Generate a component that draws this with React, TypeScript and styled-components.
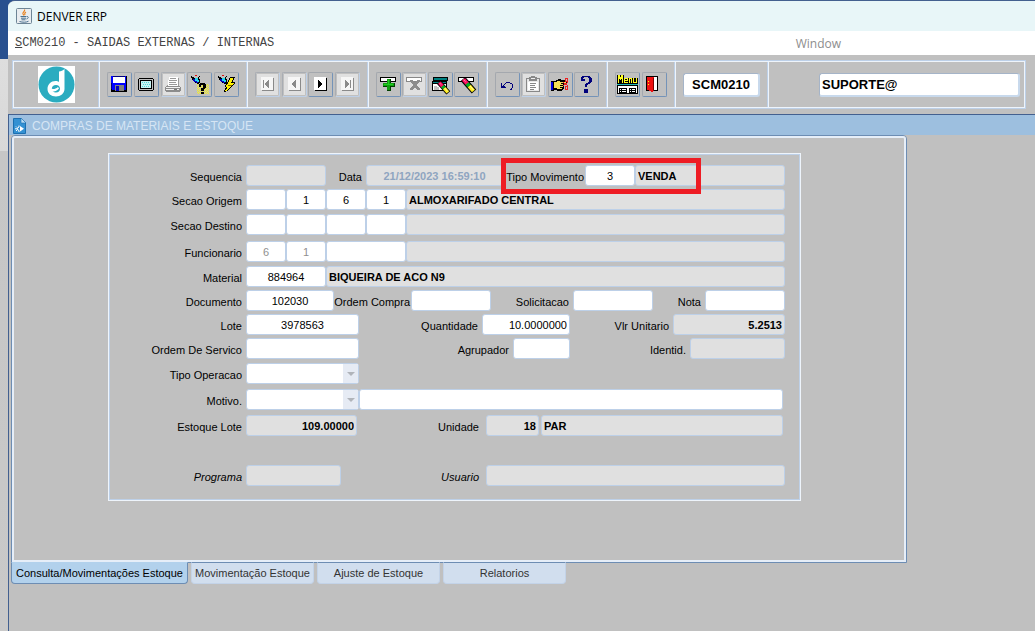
import React from "react";
import styled, { createGlobalStyle, css } from "styled-components";

const GlobalStyle = createGlobalStyle`
  * { box-sizing: border-box; }
  body {
    margin: 0;
    font-family: "Liberation Sans", Arial, sans-serif;
    font-size: 11px;
    line-height: 13px;
    color: #000;
  }
  input, select, button { font: inherit; color: inherit; margin: 0; border-radius: 0; }
`;

const edge = "#bdd0e8";
const shine = "#eef4fb";
const gray = "#c0c0c0";

const Desktop = styled.div`
  min-height: 100vh;
  display: flex;
  padding-left: 8px;
  background: linear-gradient(#28508f 59px, #dedede 59px, #d8d8d8 151px, #c6c6c6 151px, #c9c9c9);
`;

const Window = styled.div`
  flex: 1;
  min-width: 0;
  display: flex;
  flex-direction: column;
  border-top: 1px solid #43608f;
  background: ${gray};
  border-top-left-radius: 7px;
  overflow: hidden;
`;

const TitleBar = styled.header`
  height: 30px;
  display: flex;
  align-items: center;
  gap: 5px;
  padding-left: 8px;
  background: #e8f6f8;
  font-family: "Open Sans", "Noto Sans", sans-serif;
  font-size: 12px;
`;

const MenuBar = styled.nav`
  height: 24px;
  display: flex;
  align-items: center;
  justify-content: space-between;
  padding: 0 194px 0 7px;
  background: #fff;
`;

const MenuItem = styled.button<{ $mono?: boolean }>`
  border: 0;
  padding: 0;
  background: none;
  font-size: 12px;
  white-space: nowrap;
  color: ${(p) => (p.$mono ? "#444" : "#8d8d8d")};
  font-family: ${(p) => (p.$mono ? '"Liberation Mono", monospace' : '"Open Sans", sans-serif')};
`;

const Toolbar = styled.div`
  display: flex;
  height: 49px;
  margin: 5px 9px 5px 4px;
  padding: 1px;
  border: 1px solid ${edge};
  box-shadow: inset 0 0 0 1px ${shine};
`;

const Group = styled.div<{ $w?: number }>`
  display: flex;
  align-items: center;
  justify-content: space-between;
  padding: 0 8px 0 7px;
  ${(p) =>
    p.$w
      ? css`
          flex: 0 0 ${p.$w}px;
          border-right: 1px solid ${shine};
          box-shadow: inset -1px 0 ${edge};
        `
      : css`
          flex: 1;
          padding: 0 4px 0 50px;
        `}
`;

const LogoGroup = styled(Group)`
  justify-content: center;
  padding: 0;
`;

const Tool = styled.button`
  width: 25px;
  height: 25px;
  padding: 1px;
  display: block;
  background: ${gray};
  border: 1px solid;
  border-color: #a4a8ae #7493b8 #7493b8 #a4a8ae;
  border-radius: 2px;
  &:disabled {
    background: #e0e0e0;
    border-color: #a9adb3 #bdd0e8 #bdd0e8 #a9adb3;
    box-shadow: inset 0 0 0 1px ${gray};
  }
  svg { display: block; }
`;

const ToolInput = styled.input<{ $center?: boolean }>`
  width: 100%;
  height: 24px;
  padding: 0 2px;
  border: 2px solid;
  border-color: #a5b4c8 #c8d9ec #c8d9ec #a5b4c8;
  border-width: 1px 2px 2px 1px;
  border-radius: 3px;
  background: #fff;
  font-size: 13px;
  font-weight: bold;
  text-align: ${(p) => (p.$center ? "center" : "left")};
  outline: none;
`;

const Module = styled.main`
  flex: 1;
  border-top: 1px solid #43608f;
  border-left: 1px solid #43608f;
  padding-bottom: 24px;
`;

const Caption = styled.div`
  height: 20px;
  display: flex;
  align-items: center;
  gap: 6px;
  padding: 2px 0 0 4px;
  background: #9dbfdf;
  color: #d6e5f4;
  h1 { margin: 0; font-size: 12px; font-weight: normal; }
`;

const Panel = styled.div`
  margin: 0 128px 0 2px;
  border: 1px solid #6d8db3;
  border-radius: 4px 4px 0 0;
`;

const PanelBody = styled.div`
  border: 2px solid #e6eef8;
  border-radius: 3px 3px 0 0;
  padding: 15px 103px 59px 94px;
`;

const Form = styled.form`
  border: 1px solid ${shine};
  box-shadow: inset 0 0 0 1px ${edge};
  padding: 11px 15px 14px 1px;
`;

const Row = styled.div<{ $space?: number; $inset?: boolean }>`
  display: flex;
  height: 21px;
  margin-top: ${(p) => p.$space ?? 3}px;
  padding-right: ${(p) => (p.$inset ? 2 : 0)}px;
`;

const Label = styled.label<{ $w?: number; $italic?: boolean; $gap?: number }>`
  flex: 0 0 ${(p) => p.$w ?? 136}px;
  padding: 2px ${(p) => p.$gap ?? 4}px 0 0;
  line-height: 20px;
  text-align: right;
  white-space: nowrap;
  font-style: ${(p) => (p.$italic ? "italic" : "normal")};
`;

const Field = styled.input<{
  $w?: number;
  $align?: "left" | "center" | "right";
  $bold?: boolean;
  $tone?: string;
}>`
  flex: ${(p) => (p.$w ? `0 0 ${p.$w}px` : "1 1 0")};
  width: ${(p) => (p.$w ? `${p.$w}px` : "auto")};
  min-width: 0;
  height: 21px;
  padding: 0 2px;
  border: 1px solid ${edge};
  border-radius: 3px;
  background: #fff;
  color: ${(p) => p.$tone ?? "#000"};
  font-weight: ${(p) => (p.$bold ? "bold" : "normal")};
  text-align: ${(p) => p.$align ?? "left"};
  outline: none;
  &:read-only { background: #e0e0e0; }
`;

const SelectBox = styled.div`
  flex: 0 0 113px;
  position: relative;
  svg {
    position: absolute;
    top: 1px;
    right: 1px;
    pointer-events: none;
  }
`;

const Select = styled.select`
  width: 100%;
  height: 21px;
  appearance: none;
  padding: 0 18px 0 2px;
  border: 1px solid ${edge};
  border-radius: 3px;
  background: #fff;
`;

const Marked = styled.div`
  flex: 1;
  min-width: 0;
  display: flex;
  position: relative;
`;

const Highlight = styled.div`
  position: absolute;
  left: -2px;
  top: -7px;
  width: 200px;
  height: 36px;
  border: 5px solid #ee1c24;
  pointer-events: none;
`;

const Gap = styled.span`
  flex: 0 0 2px;
`;

const Tabs = styled.div`
  display: flex;
  gap: 3px;
  margin: -1px 0 0 2px;
`;

const Tab = styled.button<{ $active?: boolean }>`
  width: ${(p) => (p.$active ? 177 : 123)}px;
  height: 22px;
  padding: 0;
  white-space: nowrap;
  border: 1px solid ${(p) => (p.$active ? "#6d8db3" : "#c3d3e8")};
  border-top-color: ${(p) => (p.$active ? "#b2d1ec" : "#6d8db3")};
  border-radius: 0 0 4px 4px;
  background: ${(p) => (p.$active ? "#b2d1ec" : "#d1deee")};
  color: ${(p) => (p.$active ? "#000" : "#333")};
`;

/* ---- icons, drawn on a 21 x 21 pixel grid ---- */

const Icon = ({ children }: { children: React.ReactNode }) => (
  <svg width="21" height="21" viewBox="0 0 21 21" shapeRendering="crispEdges" aria-hidden="true">
    {children}
  </svg>
);

const SaveIcon = () => (
  <Icon>
    <path d="M2 2h16v16H3v-1H2z" fill="#000" />
    <path d="M2 2h15v14H3v-1H2z" fill="#0000ff" />
    <path d="M4 2h12v7H4z" fill="#fff" />
    <path d="M4 2h12v1H4zM2 9h1v6H2z" fill="#000080" />
    <path d="M6 11h9v6H6z" fill="#808080" />
    <path d="M7 12h3v5H7z" fill="#0000c0" />
    <path d="M2 17h16v1H2z" fill="#000" />
  </Icon>
);

const ScreenIcon = () => (
  <Icon>
    <path d="M3 4h14v1h1v11h-1v1H3v-1H2V5h1z" fill="#000" />
    <path d="M3 5h14v11H3z" fill="#c0c0c0" />
    <path d="M4 6h12v9H4z" fill="#000" />
    <path d="M5 7h10v7H5z" fill="#c8f4f4" />
    <path d="M6 8h1v1H6zM8 8h1v1H8zM10 8h1v1h-1zM12 8h1v1h-1zM7 10h1v1H7zM9 10h1v1H9zM11 10h1v1h-1zM13 10h1v1h-1zM6 12h1v1H6zM8 12h1v1H8zM10 12h1v1h-1zM12 12h1v1h-1z" fill="#4fd8d8" />
  </Icon>
);

const PrintIcon = () => (
  <Icon>
    <path d="M6 3h9v10H5V6h1z" fill="#fff" />
    <path d="M7 4h6v1H7zM6 6h8v1H6zM6 8h7v1H6zM6 10h8v1H6zM15 4h1v8h-1zM4 11h1v1H4z" fill="#999" />
    <path d="M3 12h14v1h1v4h-1v1H3v-1H2v-4h1z" fill="#8c8c8c" />
    <path d="M3 13h14v1H3zM3 15h13v1H3z" fill="#f2f2f2" />
    <path d="M11 15h3v1h-3z" fill="#777" />
  </Icon>
);

const Torch = () => (
  <>
    <path d="M6 1h2v1H6z" fill="#e01010" />
    <path d="M2 2h1v1h2v1h4V3h1V2h1v1h-1v2h1v4h-1v1H8V9H6V8H5V7H4V6H3V4H2z" fill="#000" />
    <path d="M6 4h3v2h1v2H8V7H6z" fill="#20d8f0" />
    <path d="M4 5h2v2h2v1h1v1H7V8H5V7H4z" fill="#0000c0" />
  </>
);

const QueryIcon = () => (
  <Icon>
    <g fill="#f6f020">
      {[10, 12, 14, 16, 18].map((y) =>
        [8, 10, 12, 14, 16, 18].map((x) => <path key={`${x}-${y}`} d={`M${x} ${y}h1v1h-1zM${x + 1} ${y + 1}h1v1h-1z`} />)
      )}
    </g>
    <Torch />
    <path d="M11 9h5v1h1v4h-1v1h-1v2h-3v-3h2v-3h-2v2h-2v-3h1zM12 18h3v2h-3z" fill="#000" />
  </Icon>
);

const ExecuteIcon = () => (
  <Icon>
    <Torch />
    <path d="M14 3h5v1h-1v2h-1v2h2v2h-1v1h-1v1h-1v1h-1v1h-1v1h-1v1h-1v1h-2v1H8v-2h1v-2h1v-1H9v-2h1v-2h1V8h1V6h1V4h1z" fill="#000" />
    <path d="M14 4h3v2h-1v2h-1v1h3v1h-1v1h-1v1h-1v1h-1v1h-1v1h-1v1h-1v1H9v-1h1v-1h1v-2h-1v-2h1v-1h1V8h1V6h1z" fill="#fff200" />
    <path d="M12 11h4v1h-4z" fill="#806000" />
  </Icon>
);

const NavIcon = ({ glyph, off }: { glyph: string; off?: boolean }) => (
  <Icon>
    <path d="M5 4h12v13H5z" fill={off ? "#8a8a8a" : "#000"} />
    <path d="M4 3h12v13H4z" fill={off ? "#f6f6f6" : "#fff"} />
    <path d={glyph} fill={off ? "#8a8a8a" : "#000"} />
  </Icon>
);

const leftTri = "M11 6h1v8h-1v-1h-1v-1H9v-1H8V9h1V8h1V7h1z";
const rightTri = "M8 6h1v1h1v1h1v1h1v2h-1v1h-1v1H9v1H8z";

const AddIcon = () => (
  <Icon>
    <path d="M2 3h16v5H2z" fill="#000" />
    <path d="M3 4h14v3H3z" fill="#fff" />
    <path d="M9 5h4v4h4v4h-4v4H9v-4H5V9h4z" fill="#004000" />
    <path d="M9 5h3v4h4v3h-4v4H9v-4H5V9h4z" fill="#10a010" />
    <path d="M10 6h1v4h4v1H6v-1h4z" fill="#20d020" />
  </Icon>
);

const RemoveIcon = () => (
  <Icon>
    <path d="M2 3h16v5H2z" fill="#888" />
    <path d="M3 4h14v3H3z" fill="#fff" />
    <path d="M6 6h3v1h1v1h2V7h1V6h3v2h-1v1h-1v1h-1v2h1v1h1v1h1v2h-3v-1h-1v-1h-2v1H9v1H6v-2h1v-1h1v-1h1v-2H8V9H7V8H6z" fill="#8c8c8c" />
  </Icon>
);

const Pencil = () => (
  <g shapeRendering="auto" fill="none" strokeWidth="4">
    <path d="M7 5l11 12.500" stroke="#000" strokeWidth="6" />
    <path d="M7.500 5.500l4 4.500" stroke="#ff1060" />
    <path d="M11 9.500l2.200 2.500" stroke="#00b020" />
    <path d="M13.200 12l4.300 5" stroke="#ffee20" />
    <path d="M7.500 5.500l2 2.200" stroke="#ff80b0" strokeWidth="1" />
    <path d="M14 12l3.500 4" stroke="#fffbb0" strokeWidth="1" />
  </g>
);

const ClearBlockIcon = () => (
  <Icon>
    <path d="M3 3h15v4H3zM2 7h15v10H2z" fill="#000" />
    <path d="M4 4h13v2H4zM3 8h13v1H3z" fill="#008080" />
    <path d="M3 10h13v6H3z" fill="#fff" />
    <path d="M4 12h3v1h2v3H4z" fill="#c0c0c0" />
    <g transform="translate(3 4) scale(.85)">
      <Pencil />
    </g>
  </Icon>
);

const ClearRecordIcon = () => (
  <Icon>
    <path d="M2 3h16v5H2z" fill="#000" />
    <path d="M3 4h14v3H3z" fill="#fff" />
    <Pencil />
  </Icon>
);

const UndoIcon = () => (
  <Icon>
    <path d="M4 9h1v3h1v-1h1v-1h1V9h1V8h4v1h2v1h1v4h-1v2h-2v-1h1v-1h1v-4h-2V9H9v1H8v1H7v1h1v1h1v1H4z" fill="#00007c" />
  </Icon>
);

const ClipboardIcon = () => (
  <Icon>
    <path d="M3 4h3V3h2V2h4v1h2v1h3v14H3z" fill="#888" />
    <path d="M4 5h2v2h8V5h2v12H4z" fill="#e8e8e8" />
    <path d="M8 4h4v1H8z" fill="#eee" />
    <path d="M5 8h10v8H5z" fill="#fff" />
    <path d="M7 9h6v1H7zM7 11h5v1H7zM7 13h6v1H7zM7 15h4v1H7z" fill="#888" />
  </Icon>
);

const HandIcon = () => (
  <Icon>
    <path d="M1 7h3v10H1z" fill="#000" />
    <path d="M1 8h2v8H1z" fill="#0000e0" />
    <path d="M4 7h2V6h2V5h3v1h4v1h2v3h-3v5h-1v1h-1v1H7v-1H4z" fill="#000" />
    <path d="M4 8h3V7h3v1h6v1h-5v1h2v1h-3v1h3v1h-3v1h2v1H7v-1H4z" fill="#f3df58" />
    <g fill="none" stroke="#ee2020">
      <path d="M15.500 4.500h2v3h-2zM15.500 12.500h2v3h-2zM13 11.500l5-3M13 8.500l5 3" />
    </g>
  </Icon>
);

const HelpIcon = () => (
  <Icon>
    <path d="M6 2h8v1h1v1h1v4h-1v1h-1v1h-2v1h-1v2H9v-3h1V9h2V8h1V4h-1V3H8v1H7v3H5V3h1zM8 15h4v4H8z" fill="#00007c" />
    <path d="M7 5h2v2H7z" fill="#00007c" />
  </Icon>
);

const MenuIcon = () => (
  <Icon>
    <path d="M0 1h7v3h14v6H0z" fill="#000" />
    <path d="M1 1h2v2h1V1h2v8H5V5H4v1H3V5H2v4H1zM7 4h4v3H8v1h3v1H7zM12 4h3v5h-1V5h-1v4h-1zM16 4h1v4h2V4h1v5h-4z" fill="#ffff20" />
    <path d="M8 5h2v1H8z" fill="#000" />
    <path d="M0 10h21v1H0z" fill="#20b8b8" />
    <path d="M0 11h21v9H0z" fill="#000" />
    <path d="M1 12h19v2H1zM1 14h1v5H1zM19 14h1v5h-1zM10 14h2v5h-2z" fill="#fff" />
    <path d="M3 15h1v1H3zM5 15h4v1H5zM13 15h1v1h-1zM15 15h3v1h-3zM3 17h1v1H3zM5 17h4v1H5zM13 17h1v1h-1zM15 17h3v1h-3z" fill="#fff" />
  </Icon>
);

const ExitIcon = () => (
  <Icon>
    <path d="M2 2h12v15H2z" fill="#000" />
    <path d="M10 3h3v13h-3z" fill="#fff" />
    <path d="M3 3h7v13l-2 2H7l-1-1-3-1z" fill="#ee1111" />
    <path d="M9 4h1v13H9z" fill="#800000" />
    <path d="M4 7h1v1H4zM4 10h1v1H4z" fill="#ffff00" />
  </Icon>
);

const Logo = () => (
  <svg width="37" height="37" viewBox="0 0 37 37" aria-label="Denver">
    <path fill="#fff" d="M0 0h37v37H0z" />
    <circle cx="18.500" cy="18.500" r="18" fill="#2bacc0" />
    <path
      d="M21 5.500c2 0 4-1 5.500-2.500v20c0 4.500-4 7.500-8.500 7.500-5 0-8.500-3-8.500-7.500s3.500-8 8-8c1.500 0 2.500.3 3.500 1zM18 19c-2.500 0-4.200 1.600-4.200 3.800s1.700 3.700 4.200 3.700 4-1.500 4-3.700-1.500-3.800-4-3.800z"
      fill="#fff"
      fillRule="evenodd"
    />
    <path d="M10 20c2 3 6 4.500 10 1l1 1.500c-3 3.500-8 4-11 2z" fill="#fff" />
  </svg>
);

const JavaIcon = () => (
  <svg width="16" height="16" viewBox="0 0 16 16" aria-hidden="true">
    <rect x=".5" y=".5" width="15" height="15" rx="1" fill="#e9edf0" stroke="#6d8596" />
    <path d="M8.500 1.500c1 2-2.500 2.700-1.500 4.500l1 1.500M10 4c-2 1-1.500 1.500-1 3" fill="none" stroke="#e8801c" strokeWidth="1.200" />
    <path d="M4.500 8.500h6M5 10.200h5M5.500 11.800h4M11 8.500c2 0 1.500 2-.5 2.500M3.500 13.500c3 1 7 1 9-.3" fill="none" stroke="#4a7190" />
  </svg>
);

const ModuleIcon = () => (
  <svg width="13" height="16" viewBox="0 0 13 16" aria-hidden="true">
    <path d="M.5.5h7.500l4.500 4.500v10.500H.5z" fill="#3391d3" stroke="#1b6fb0" />
    <path d="M8 0l5 5H8z" fill="#b7dcf5" stroke="#1b6fb0" strokeWidth=".6" />
    <path d="M7 8l4 2.800L7 13.500z" fill="#fff" />
    <path d="M6 7.500v1.500M6 12.500V14M2 10.800h2M3 8.500l1 1M3 13l1-1M6 9.200a1.600 1.600 0 0 0 0 3.200" stroke="#fff" fill="none" />
  </svg>
);

const Caret = () => (
  <svg width="15" height="19" viewBox="0 0 15 19" aria-hidden="true">
    <path d="M0 0h15v19H0z" fill="#e6ebf4" />
    <path d="M4 8h8l-4 4z" fill="#b0b4ba" />
  </svg>
);

const tools: { label: string; icon: React.ReactNode; off?: boolean }[][] = [
  [
    { label: "Salvar", icon: <SaveIcon /> },
    { label: "Tela", icon: <ScreenIcon /> },
    { label: "Imprimir", icon: <PrintIcon />, off: true },
    { label: "Consultar", icon: <QueryIcon /> },
    { label: "Executar consulta", icon: <ExecuteIcon /> },
  ],
  [
    { label: "Primeiro", icon: <NavIcon off glyph={"M6 6h1v8H6z" + leftTri} />, off: true },
    { label: "Anterior", icon: <NavIcon off glyph={leftTri} />, off: true },
    { label: "Proximo", icon: <NavIcon glyph={rightTri} /> },
    { label: "Ultimo", icon: <NavIcon off glyph={"M13 6h1v8h-1z" + rightTri} />, off: true },
  ],
  [
    { label: "Inserir", icon: <AddIcon /> },
    { label: "Remover", icon: <RemoveIcon />, off: true },
    { label: "Limpar bloco", icon: <ClearBlockIcon /> },
    { label: "Limpar registro", icon: <ClearRecordIcon /> },
  ],
  [
    { label: "Desfazer", icon: <UndoIcon /> },
    { label: "Lista", icon: <ClipboardIcon />, off: true },
    { label: "Recortar", icon: <HandIcon /> },
    { label: "Ajuda", icon: <HelpIcon /> },
  ],
  [
    { label: "Menu", icon: <MenuIcon /> },
    { label: "Sair", icon: <ExitIcon /> },
  ],
];
const groupWidths = [148, 121, 119, 120, 68];

export default function App() {
  return (
    <Desktop>
      <GlobalStyle />
      <Window>
        <TitleBar>
          <JavaIcon />
          <span>DENVER ERP</span>
        </TitleBar>
        <MenuBar>
          <MenuItem $mono>
            <u>S</u>CM0210 - SAIDAS EXTERNAS / INTERNAS
          </MenuItem>
          <MenuItem>Window</MenuItem>
        </MenuBar>

        <Toolbar>
          <LogoGroup $w={86}>
            <Logo />
          </LogoGroup>
          {tools.map((group, i) => (
            <Group key={i} $w={groupWidths[i]}>
              {group.map((t) => (
                <Tool key={t.label} aria-label={t.label} disabled={t.off}>
                  {t.icon}
                </Tool>
              ))}
            </Group>
          ))}
          <Group $w={93}>
            <ToolInput $center aria-label="Programa atual" defaultValue="SCM0210" />
          </Group>
          <Group>
            <ToolInput aria-label="Usuario atual" defaultValue="SUPORTE@" />
          </Group>
        </Toolbar>

        <Module>
          <Caption>
            <ModuleIcon />
            <h1>COMPRAS DE MATERIAIS E ESTOQUE</h1>
          </Caption>
          <Panel>
            <PanelBody>
              <Form onSubmit={(e) => e.preventDefault()}>
                <Row $space={0}>
                  <Label htmlFor="seq">Sequencia</Label>
                  <Field id="seq" $w={80} readOnly />
                  <Label htmlFor="data" $w={40}>Data</Label>
                  <Field id="data" $w={137} $align="center" $bold $tone="#8fa5c0" readOnly defaultValue="21/12/2023 16:59:10" />
                  <Marked>
                    <Label htmlFor="tipo" $w={82} $gap={1}>Tipo Movimento</Label>
                    <Field id="tipo" $w={50} $align="center" defaultValue="3" />
                    <Field aria-label="Descricao do movimento" $bold readOnly defaultValue="VENDA" />
                    <Highlight />
                  </Marked>
                </Row>
                <Row>
                  <Label htmlFor="origem">Secao Origem</Label>
                  <Field id="origem" $w={40} $align="center" />
                  <Field aria-label="Origem 2" $w={40} $align="center" defaultValue="1" />
                  <Field aria-label="Origem 3" $w={40} $align="center" defaultValue="6" />
                  <Field aria-label="Origem 4" $w={40} $align="center" defaultValue="1" />
                  <Field aria-label="Nome da origem" $bold readOnly defaultValue="ALMOXARIFADO CENTRAL" />
                </Row>
                <Row $space={4}>
                  <Label htmlFor="destino">Secao Destino</Label>
                  <Field id="destino" $w={40} />
                  <Field aria-label="Destino 2" $w={40} />
                  <Field aria-label="Destino 3" $w={40} />
                  <Field aria-label="Destino 4" $w={40} />
                  <Field aria-label="Nome do destino" readOnly />
                </Row>
                <Row $space={6}>
                  <Label htmlFor="func">Funcionario</Label>
                  <Field id="func" $w={40} $align="center" $tone="#8f8f8f" defaultValue="6" />
                  <Field aria-label="Funcionario 2" $w={40} $align="center" $tone="#8f8f8f" defaultValue="1" />
                  <Field aria-label="Funcionario 3" $w={80} />
                  <Field aria-label="Nome do funcionario" readOnly />
                </Row>
                <Row $space={4}>
                  <Label htmlFor="material">Material</Label>
                  <Field id="material" $w={80} $align="center" defaultValue="884964" />
                  <Field aria-label="Nome do material" $bold readOnly defaultValue="BIQUEIRA DE ACO N9" />
                </Row>
                <Row>
                  <Label htmlFor="doc">Documento</Label>
                  <Field id="doc" $w={88} $align="center" defaultValue="102030" />
                  <Label htmlFor="ordem" $w={77} $gap={1}>Ordem Compra</Label>
                  <Field id="ordem" $w={80} />
                  <Label htmlFor="solic" $w={82}>Solicitacao</Label>
                  <Field id="solic" $w={80} />
                  <Label htmlFor="nota" $w={52}>Nota</Label>
                  <Field id="nota" />
                </Row>
                <Row>
                  <Label htmlFor="lote">Lote</Label>
                  <Field id="lote" $w={113} $align="center" defaultValue="3978563" />
                  <Label htmlFor="qtd" $w={123}>Quantidade</Label>
                  <Field id="qtd" $w={88} $align="right" defaultValue="10.0000000" />
                  <Label htmlFor="vlr" $w={103}>Vlr Unitario</Label>
                  <Field id="vlr" $align="right" $bold readOnly defaultValue="5.2513" />
                </Row>
                <Row>
                  <Label htmlFor="os">Ordem De Servico</Label>
                  <Field id="os" $w={113} />
                  <Label htmlFor="agr" $w={154}>Agrupador</Label>
                  <Field id="agr" $w={57} />
                  <Label htmlFor="ident" $w={120}>Identid.</Label>
                  <Field id="ident" readOnly />
                </Row>
                <Row $space={4}>
                  <Label htmlFor="oper">Tipo Operacao</Label>
                  <SelectBox>
                    <Select id="oper"><option /></Select>
                    <Caret />
                  </SelectBox>
                </Row>
                <Row $space={5} $inset>
                  <Label htmlFor="motivo">Motivo.</Label>
                  <SelectBox>
                    <Select id="motivo"><option /></Select>
                    <Caret />
                  </SelectBox>
                  <Field aria-label="Descricao do motivo" />
                </Row>
                <Row $space={5} $inset>
                  <Label htmlFor="estoque">Estoque Lote</Label>
                  <Field id="estoque" $w={111} $align="right" $bold readOnly defaultValue="109.00000" />
                  <Label htmlFor="un" $w={129} $gap={7}>Unidade</Label>
                  <Field id="un" $w={53} $align="right" $bold readOnly defaultValue="18" />
                  <Gap />
                  <Field aria-label="Nome da unidade" $bold readOnly defaultValue="PAR" />
                </Row>
                <Row $space={29}>
                  <Label htmlFor="prog" $italic>Programa</Label>
                  <Field id="prog" $w={95} readOnly />
                  <Label htmlFor="usr" $w={145} $gap={7} $italic>Usuario</Label>
                  <Field id="usr" readOnly />
                </Row>
              </Form>
            </PanelBody>
          </Panel>
          <Tabs role="tablist">
            <Tab role="tab" aria-selected $active>Consulta/Movimentações Estoque</Tab>
            <Tab role="tab">Movimentação Estoque</Tab>
            <Tab role="tab">Ajuste de Estoque</Tab>
            <Tab role="tab">Relatorios</Tab>
          </Tabs>
        </Module>
      </Window>
    </Desktop>
  );
}
